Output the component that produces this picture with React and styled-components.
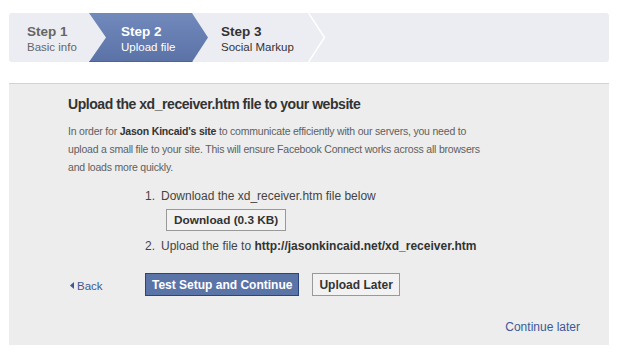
import React from "react";
import styled, { createGlobalStyle } from "styled-components";

const GlobalStyle = createGlobalStyle`
  body {
    margin: 0;
    background: #fff;
    font-family: "Liberation Sans", Arial, sans-serif;
  }
`;

const steps = [
  { n: 1, label: "Basic info", state: "done" },
  { n: 2, label: "Upload file", state: "active" },
  { n: 3, label: "Social Markup", state: "next" },
];

function App() {
  return (
    <Page>
      <GlobalStyle />
      <StepBar>
        {steps.map((s) =>
          s.state === "active" ? (
            <ActiveStep key={s.n}>
              <StepTitle>Step {s.n}</StepTitle>
              <StepLabel>{s.label}</StepLabel>
            </ActiveStep>
          ) : (
            <Step key={s.n} $state={s.state}>
              <StepText>
                <StepTitle>Step {s.n}</StepTitle>
                <StepLabel>{s.label}</StepLabel>
              </StepText>
              {s.state === "next" && (
                <svg width="18" height="49" viewBox="0 0 18 49">
                  <polyline points="0.5,0 16.5,24.5 0.5,49" fill="none" stroke="#fff" strokeWidth="1.5" />
                </svg>
              )}
            </Step>
          )
        )}
      </StepBar>

      <Panel>
        <Heading>Upload the xd_receiver.htm file to your website</Heading>
        <Intro>
          In order for <b>Jason Kincaid's site</b> to communicate efficiently with our servers, you need to
          <br />
          upload a small file to your site. This will ensure Facebook Connect works across all browsers
          <br />
          and loads more quickly.
        </Intro>

        <List>
          <ListItem>
            <Num>1.</Num>
            <span>Download the xd_receiver.htm file below</span>
          </ListItem>
          <DownloadButton>Download (0.3 KB)</DownloadButton>
          <ListItem $top={6}>
            <Num>2.</Num>
            <span>
              Upload the file to <b>http://jasonkincaid.net/xd_receiver.htm</b>
            </span>
          </ListItem>
        </List>

        <Actions>
          <BackLink href="#">
            <svg width="4" height="7" viewBox="0 0 4 7">
              <polygon points="4,0 0,3.5 4,7" fill="#3b5998" />
            </svg>
            Back
          </BackLink>
          <Button $primary>Test Setup and Continue</Button>
          <Button>Upload Later</Button>
        </Actions>

        <Footer>
          <LaterLink href="#">Continue later</LaterLink>
        </Footer>
      </Panel>
    </Page>
  );
}

const Page = styled.div`
  width: 600px;
  padding: 13px 10px 0 9px;
`;

const StepBar = styled.div`
  display: flex;
  height: 49px;
  background: #ecedf2;
  border-radius: 3px;
  overflow: hidden;
`;

const Step = styled.div`
  display: flex;
  align-items: center;
  color: ${(p) => (p.$state === "done" ? "#666" : "#333")};
  padding-left: ${(p) => (p.$state === "done" ? "18px" : "13px")};
  width: ${(p) => (p.$state === "done" ? "62px" : "auto")};
`;

const StepText = styled.div`
  width: 87px;
  padding-top: 3px;
`;

const ActiveStep = styled.div`
  width: 87px;
  padding: 3px 0 0 32px;
  display: flex;
  flex-direction: column;
  justify-content: center;
  color: #fff;
  background: linear-gradient(#7189bb, #5a72a6);
  box-shadow: inset 0 -1px 0 #4b6398;
  clip-path: polygon(0 0, 103px 0, 119px 50%, 103px 100%, 0 100%, 17px 50%);
`;

const StepTitle = styled.div`
  font-size: 13.5px;
  font-weight: bold;
  line-height: 16px;
`;

const StepLabel = styled.div`
  font-size: 11.5px;
  line-height: 14px;
`;

const Panel = styled.div`
  margin-top: 21px;
  background: #ededed;
  border-top: 1px solid #d2d2d2;
  padding: 11px 29px 10px 59px;
  color: #333;
`;

const Heading = styled.h2`
  margin: 0;
  font-size: 14px;
  letter-spacing: -0.45px;
  line-height: 18px;
  color: #333;
`;

const Intro = styled.p`
  margin: 9px 0 0;
  font-size: 10.5px;
  letter-spacing: -0.2px;
  line-height: 18px;
  color: #606060;

  b {
    color: #333;
  }
`;

const List = styled.div`
  margin: 11px 0 0 77px;
  font-size: 12px;
  line-height: 18px;
  color: #444;

  b {
    color: #333;
  }
`;

const ListItem = styled.div`
  display: flex;
  margin-top: ${(p) => p.$top || 0}px;
`;

const Num = styled.span`
  width: 16px;
`;

const DownloadButton = styled.button`
  display: block;
  margin: 4px 0 0 21px;
  height: 22px;
  padding: 0 7px;
  font-family: inherit;
  font-size: 11.8px;
  font-weight: bold;
  color: #333;
  background: #f2f2f2;
  border: 1px solid #999;
  border-radius: 0;
`;

const Actions = styled.div`
  display: flex;
  align-items: center;
  gap: 13px;
  margin-top: 18px;
`;

const BackLink = styled.a`
  width: 62px;
  display: flex;
  align-items: center;
  gap: 3px;
  padding-left: 2px;
  font-size: 11.5px;
  color: #3b5998;
  text-decoration: none;
  margin-top: 2px;
`;

const Button = styled.button`
  height: 23px;
  padding: 0 6px;
  font-family: inherit;
  font-size: 12px;
  font-weight: bold;
  color: ${(p) => (p.$primary ? "#fff" : "#333")};
  background: ${(p) => (p.$primary ? "#5b74a8" : "#f2f2f2")};
  border: 1px solid ${(p) => (p.$primary ? "#29447e" : "#999")};
  border-radius: 0;
`;

const Footer = styled.div`
  display: flex;
  justify-content: flex-end;
  margin-top: 23px;
  line-height: 16px;
`;

const LaterLink = styled.a`
  font-size: 12px;
  color: #3b5998;
  text-decoration: none;
`;

export default App;
